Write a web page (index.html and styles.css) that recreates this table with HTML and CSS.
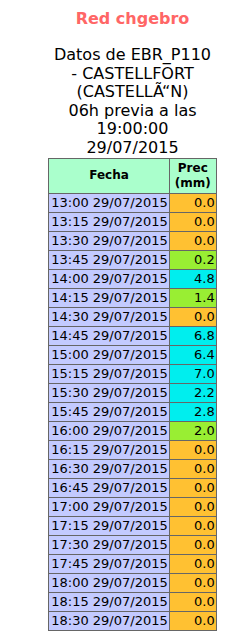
FILE: index.html
```
<!DOCTYPE html>
<html>
<head>
<meta charset="utf-8">
<link rel="stylesheet" href="styles.css">
</head>
<body>
<div class="page">
  <div class="title">Red chgebro</div>
  <div class="subtitle">Datos de EBR_P110<br>- CASTELLFORT<br>(CASTELLÃ“N)<br>06h previa a las<br>19:00:00<br>29/07/2015</div>
  <table class="data">
    <tr><th class="h-date">Fecha</th><th class="h-val">Prec<br>(mm)</th></tr>
    <tr><td class="d">13:00 29/07/2015</td><td class="v zero">0.0</td></tr>
    <tr><td class="d">13:15 29/07/2015</td><td class="v zero">0.0</td></tr>
    <tr><td class="d">13:30 29/07/2015</td><td class="v zero">0.0</td></tr>
    <tr><td class="d">13:45 29/07/2015</td><td class="v low">0.2</td></tr>
    <tr><td class="d">14:00 29/07/2015</td><td class="v mid">4.8</td></tr>
    <tr><td class="d">14:15 29/07/2015</td><td class="v low">1.4</td></tr>
    <tr><td class="d">14:30 29/07/2015</td><td class="v zero">0.0</td></tr>
    <tr><td class="d">14:45 29/07/2015</td><td class="v mid">6.8</td></tr>
    <tr><td class="d">15:00 29/07/2015</td><td class="v mid">6.4</td></tr>
    <tr><td class="d">15:15 29/07/2015</td><td class="v mid">7.0</td></tr>
    <tr><td class="d">15:30 29/07/2015</td><td class="v mid">2.2</td></tr>
    <tr><td class="d">15:45 29/07/2015</td><td class="v mid">2.8</td></tr>
    <tr><td class="d">16:00 29/07/2015</td><td class="v low">2.0</td></tr>
    <tr><td class="d">16:15 29/07/2015</td><td class="v zero">0.0</td></tr>
    <tr><td class="d">16:30 29/07/2015</td><td class="v zero">0.0</td></tr>
    <tr><td class="d">16:45 29/07/2015</td><td class="v zero">0.0</td></tr>
    <tr><td class="d">17:00 29/07/2015</td><td class="v zero">0.0</td></tr>
    <tr><td class="d">17:15 29/07/2015</td><td class="v zero">0.0</td></tr>
    <tr><td class="d">17:30 29/07/2015</td><td class="v zero">0.0</td></tr>
    <tr><td class="d">17:45 29/07/2015</td><td class="v zero">0.0</td></tr>
    <tr><td class="d">18:00 29/07/2015</td><td class="v zero">0.0</td></tr>
    <tr><td class="d">18:15 29/07/2015</td><td class="v zero">0.0</td></tr>
    <tr><td class="d">18:30 29/07/2015</td><td class="v zero">0.0</td></tr>
  </table>
</div>
</body>
</html>
```
FILE: styles.css
```
html, body {
  margin: 0;
  padding: 0;
  background: #ffffff;
}
.page {
  padding: 8px 0 0 14px;
  width: 251px;
  box-sizing: border-box;
  font-family: "DejaVu Sans", Verdana, sans-serif;
  color: #000000;
  text-align: center;
}
.title {
  font-weight: bold;
  font-size: 16px;
  color: #ff6666;
  line-height: 19px;
  margin: 1px 0 18px 0;
}
.subtitle {
  font-size: 16px;
  line-height: 18.6px;
}
.data {
  border-collapse: collapse;
  margin: 0 auto;
  border: 1px solid #666666;
  font-size: 13px;
}
.data th, .data td {
  border: 1px solid #666666;
}
.data th {
  background: #aaffcc;
  font-size: 12px;
  font-weight: bold;
  line-height: 15px;
  padding: 2px 2px;
}
.data .h-date {
  height: 29px;
}
.data td {
  line-height: 16px;
  height: 16px;
  padding: 1px 1px 1px 2px;
}
.data .d {
  background: #c3caff;
  text-align: left;
}
.data .v {
  text-align: right;
  width: 43px;
}
.zero { background: #ffc132; }
.low { background: #99ee33; }
.mid { background: #00eeee; }
```
